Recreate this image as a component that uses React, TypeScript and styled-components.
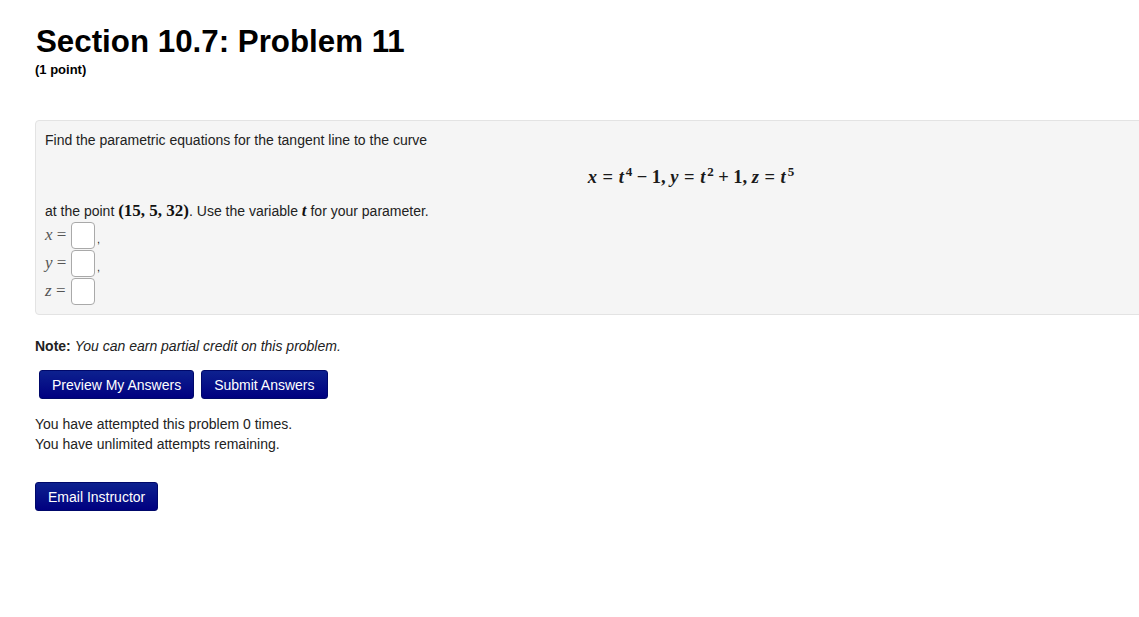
import React from "react";
import styled, { createGlobalStyle } from "styled-components";

const GlobalStyle = createGlobalStyle`
  html, body {
    margin: 0;
    padding: 0;
    overflow: hidden;
    background: #ffffff;
  }
  body {
    font-family: "Liberation Sans", Arial, sans-serif;
    font-size: 14px;
    color: #222;
  }
`;

const Page = styled.main`
  padding: 0 0 0 35px;
`;

const Title = styled.h2`
  margin: 25px 0 0 1px;
  font-size: 31.3px;
  line-height: 34px;
  font-weight: 700;
  color: #000;
`;

const Points = styled.div`
  margin-top: 3px;
  font-size: 13px;
  line-height: 16px;
  font-weight: 700;
  color: #000;
`;

const ProblemPanel = styled.div`
  margin-top: 42px;
  width: 1292px;
  padding: 9px;
  background: #f5f5f5;
  border: 1px solid #e3e3e3;
  border-radius: 4px;
`;

const Line = styled.p`
  margin: 0;
  line-height: 20px;
`;

const Math = styled.span`
  font-family: "Liberation Serif", "DejaVu Serif", serif;
  font-size: 17px;
  font-weight: 700;
  color: #111;
`;

const Var = styled.i`
  font-family: "Liberation Serif", "DejaVu Serif", serif;
  font-style: italic;
`;

const Op = styled.span<{ $space?: string }>`
  margin: 0 ${(p) => p.$space ?? "0.3em"};
`;

const Sup = styled.sup`
  font-size: 13px;
  line-height: 0;
  margin-left: 2px;
  vertical-align: 7px;
`;

const DisplayMath = styled.div`
  margin: 15px 0 12px;
  line-height: 24px;
  text-align: center;
  font-family: "Liberation Serif", "DejaVu Serif", serif;
  font-size: 18.5px;
  font-weight: 700;
  color: #1a1a1a;
  white-space: nowrap;
`;

const AnswerRow = styled.div`
  display: flex;
  align-items: center;
  height: 28px;
`;

const AnswerLabel = styled.span`
  width: 26px;
  font-family: "Liberation Serif", "DejaVu Serif", serif;
  font-size: 17px;
  color: #555;
  white-space: nowrap;
`;

const AnswerBox = styled.input`
  box-sizing: border-box;
  width: 24px;
  height: 27px;
  margin: 0;
  padding: 0;
  background: #fff;
  border: 1px solid #a9a9a9;
  border-radius: 4px;
  outline: none;
`;

const Comma = styled.span`
  align-self: flex-end;
  margin: 0 0 5px 2px;
  font-size: 11px;
  line-height: 10px;
`;

const Note = styled.p`
  margin: 21px 0 0;
  line-height: 20px;
  em {
    font-style: italic;
  }
`;

const ButtonRow = styled.div`
  display: flex;
  gap: 7px;
  margin-top: 14px;
  padding-left: 4px;
`;

const Button = styled.button`
  height: 29px;
  padding: 0 12px;
  font-family: "Liberation Sans", Arial, sans-serif;
  font-size: 14px;
  color: #fff;
  background: linear-gradient(to bottom, #0d218f, #000080);
  border: 1px solid #00086a;
  border-radius: 3px;
  cursor: pointer;
`;

const Attempts = styled.div`
  margin-top: 15px;
  line-height: 20px;
`;

const EmailRow = styled.div`
  margin-top: 28px;
`;

const answers = [
  { name: "x", comma: true },
  { name: "y", comma: true },
  { name: "z", comma: false },
];

export default function App() {
  return (
    <>
      <GlobalStyle />
      <Page>
        <Title>Section 10.7: Problem 11</Title>
        <Points>(1 point)</Points>

        <ProblemPanel>
          <Line>Find the parametric equations for the tangent line to the curve</Line>
          <DisplayMath>
            <Var>x</Var>
            <Op>=</Op>
            <Var>t</Var>
            <Sup>4</Sup>
            <Op $space="0.24em">−</Op>1,
            <Var> y</Var>
            <Op>=</Op>
            <Var>t</Var>
            <Sup>2</Sup>
            <Op $space="0.24em">+</Op>1,
            <Var> z</Var>
            <Op>=</Op>
            <Var>t</Var>
            <Sup>5</Sup>
          </DisplayMath>
          <Line>
            at the point <Math>(15, 5, 32)</Math>. Use the variable{" "}
            <Math>
              <Var>t</Var>
            </Math>{" "}
            for your parameter.
          </Line>
          {answers.map((a) => (
            <AnswerRow key={a.name}>
              <AnswerLabel>
                <Var>{a.name}</Var> =
              </AnswerLabel>
              <AnswerBox type="text" aria-label={a.name} />
              {a.comma && <Comma>,</Comma>}
            </AnswerRow>
          ))}
        </ProblemPanel>

        <Note>
          <b>Note:</b> <em>You can earn partial credit on this problem.</em>
        </Note>

        <ButtonRow>
          <Button>Preview My Answers</Button>
          <Button>Submit Answers</Button>
        </ButtonRow>

        <Attempts>
          You have attempted this problem 0 times.
          <br />
          You have unlimited attempts remaining.
        </Attempts>

        <EmailRow>
          <Button>Email Instructor</Button>
        </EmailRow>
      </Page>
    </>
  );
}
